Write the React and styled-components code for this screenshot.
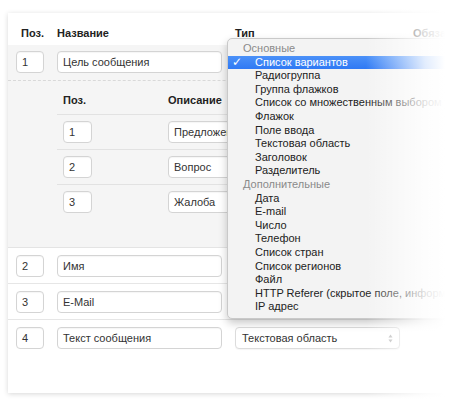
import React from "react";
import styled, { createGlobalStyle } from "styled-components";

const GlobalStyle = createGlobalStyle`
  html, body {
    margin: 0;
    background: #fff;
    overflow: hidden;
  }
  body {
    font-family: "Liberation Sans", Arial, sans-serif;
    font-size: 11px;
    color: #333;
  }
`;

const Page = styled.div`
  position: relative;
  width: 457px;
  height: 410px;
  padding: 13px 0 0 8px;
  box-sizing: border-box;
  overflow: hidden;
`;

const Card = styled.div`
  position: relative;
  width: 442px;
  background: #fff;
  box-shadow: 0 1px 5px rgba(0, 0, 0, 0.16);
`;

const Line = styled.div`
  display: grid;
  grid-template-columns: 28px 165px 165px 1fr;
  column-gap: 13px;
  align-items: center;
  padding: ${(p) => p.$pad || "7px 8px 6px"};
  border-bottom: ${(p) => p.$border || "1px solid #e6e6e6"};
`;

const Head = styled(Line)`
  font-weight: bold;
  line-height: 13px;
  color: #222;
  white-space: nowrap;
`;

const PosTitle = styled.span`
  justify-self: end;
`;

const Group = styled.div`
  background: #f5f5f5;
  border-bottom: 1px solid #e4e4e4;
`;

const Nested = styled.div`
  margin-left: 49px;
  padding-bottom: 28px;
`;

const SubLine = styled.div`
  display: grid;
  grid-template-columns: 29px 165px;
  column-gap: 76px;
  align-items: center;
  padding: ${(p) => p.$pad || "6px 6px"};
  border-bottom: ${(p) => (p.$last ? "none" : "1px solid #e2e2e2")};
`;

const SubHead = styled(SubLine)`
  font-weight: bold;
  line-height: 13px;
  color: #222;
`;

const Field = styled.div`
  height: 22px;
  box-sizing: border-box;
  display: flex;
  align-items: center;
  padding: 0 5px;
  background: #fff;
  border: 1px solid #d4d4d4;
  border-radius: 4px;
  box-shadow: inset 0 1px 1px rgba(0, 0, 0, 0.04);
  color: #333;
  white-space: nowrap;
  overflow: hidden;
`;

const Select = styled(Field)`
  justify-content: space-between;
  padding: 0 6px;
  border-color: #dcdcdc;
  box-shadow: 0 1px 1px rgba(0, 0, 0, 0.04);
`;

const LastRow = styled(Line)`
  padding-bottom: 44px;
  border-bottom: none;
`;

const Menu = styled.div`
  position: absolute;
  left: 219px;
  top: 25px;
  width: 245px;
  padding: 3px 0 4px;
  background: #f3f3f3;
  border: 1px solid #c9c9c9;
  border-radius: 5px;
  box-shadow: 0 4px 9px rgba(0, 0, 0, 0.22);
  font-size: 11px;
  line-height: 13.6px;
  overflow: hidden;
`;

const MenuLabel = styled.div`
  padding-left: 15px;
  color: #8a8a8a;
  white-space: nowrap;
`;

const MenuItem = styled.div`
  position: relative;
  padding-left: 27px;
  white-space: nowrap;
  overflow: hidden;
  color: ${(p) => (p.$selected ? "#fff" : "#222")};
  background: ${(p) =>
    p.$selected ? "linear-gradient(#4b91f8, #2f79f4)" : "transparent"};
`;

const Check = styled.span`
  position: absolute;
  left: 4px;
  top: 0;
  font-family: "DejaVu Sans", sans-serif;
  font-size: 12px;
  font-weight: bold;
`;

const Fade = styled.div`
  position: absolute;
  inset: 0;
  pointer-events: none;
  background: linear-gradient(
    to right,
    rgba(255, 255, 255, 0) 366px,
    rgba(255, 255, 255, 0.85) 425px,
    #fff 445px
  );
`;

const Arrows = () => (
  <svg width="5" height="9" viewBox="0 0 5 9">
    <path d="M2.5 0.5 L4.5 3.5 L0.5 3.5 Z" fill="#b5b5b5" />
    <path d="M2.5 8.5 L4.5 5.5 L0.5 5.5 Z" fill="#b5b5b5" />
  </svg>
);

const basic = [
  "Список вариантов",
  "Радиогруппа",
  "Группа флажков",
  "Список со множественным выбором",
  "Флажок",
  "Поле ввода",
  "Текстовая область",
  "Заголовок",
  "Разделитель",
];

const extra = [
  "Дата",
  "E-mail",
  "Число",
  "Телефон",
  "Список стран",
  "Список регионов",
  "Файл",
  "HTTP Referer (скрытое поле, информ",
  "IP адрес",
];

const options = [
  { pos: 1, text: "Предложение" },
  { pos: 2, text: "Вопрос" },
  { pos: 3, text: "Жалоба" },
];

const fields = [
  { pos: 2, name: "Имя" },
  { pos: 3, name: "E-Mail" },
];

export default function App() {
  return (
    <>
      <GlobalStyle />
      <Page>
        <Card>
          <Head $pad="14px 8px 5px" $border="none">
            <PosTitle>Поз.</PosTitle>
            <span>Название</span>
            <span>Тип</span>
            <span>Обяза</span>
          </Head>

          <Group>
            <Line $pad="6px 8px 7px" $border="1px dashed #d9d9d9">
              <Field>1</Field>
              <Field>Цель сообщения</Field>
              <Select />
            </Line>
            <Nested>
              <SubHead $pad="13px 6px 7px">
                <span>Поз.</span>
                <span>Описание</span>
              </SubHead>
              {options.map((o, i) => (
                <SubLine key={o.pos} $last={i === options.length - 1}>
                  <Field>{o.pos}</Field>
                  <Field>{o.text}</Field>
                </SubLine>
              ))}
            </Nested>
          </Group>

          {fields.map((f) => (
            <Line key={f.pos}>
              <Field>{f.pos}</Field>
              <Field>{f.name}</Field>
              <Select />
            </Line>
          ))}

          <LastRow>
            <Field>4</Field>
            <Field>Текст сообщения</Field>
            <Select>
              Текстовая область
              <Arrows />
            </Select>
          </LastRow>

          <Menu>
            <MenuLabel>Основные</MenuLabel>
            {basic.map((t, i) => (
              <MenuItem key={t} $selected={i === 0}>
                {i === 0 && <Check>✓</Check>}
                {t}
              </MenuItem>
            ))}
            <MenuLabel>Дополнительные</MenuLabel>
            {extra.map((t) => (
              <MenuItem key={t}>{t}</MenuItem>
            ))}
          </Menu>
        </Card>
        <Fade />
      </Page>
    </>
  );
}
